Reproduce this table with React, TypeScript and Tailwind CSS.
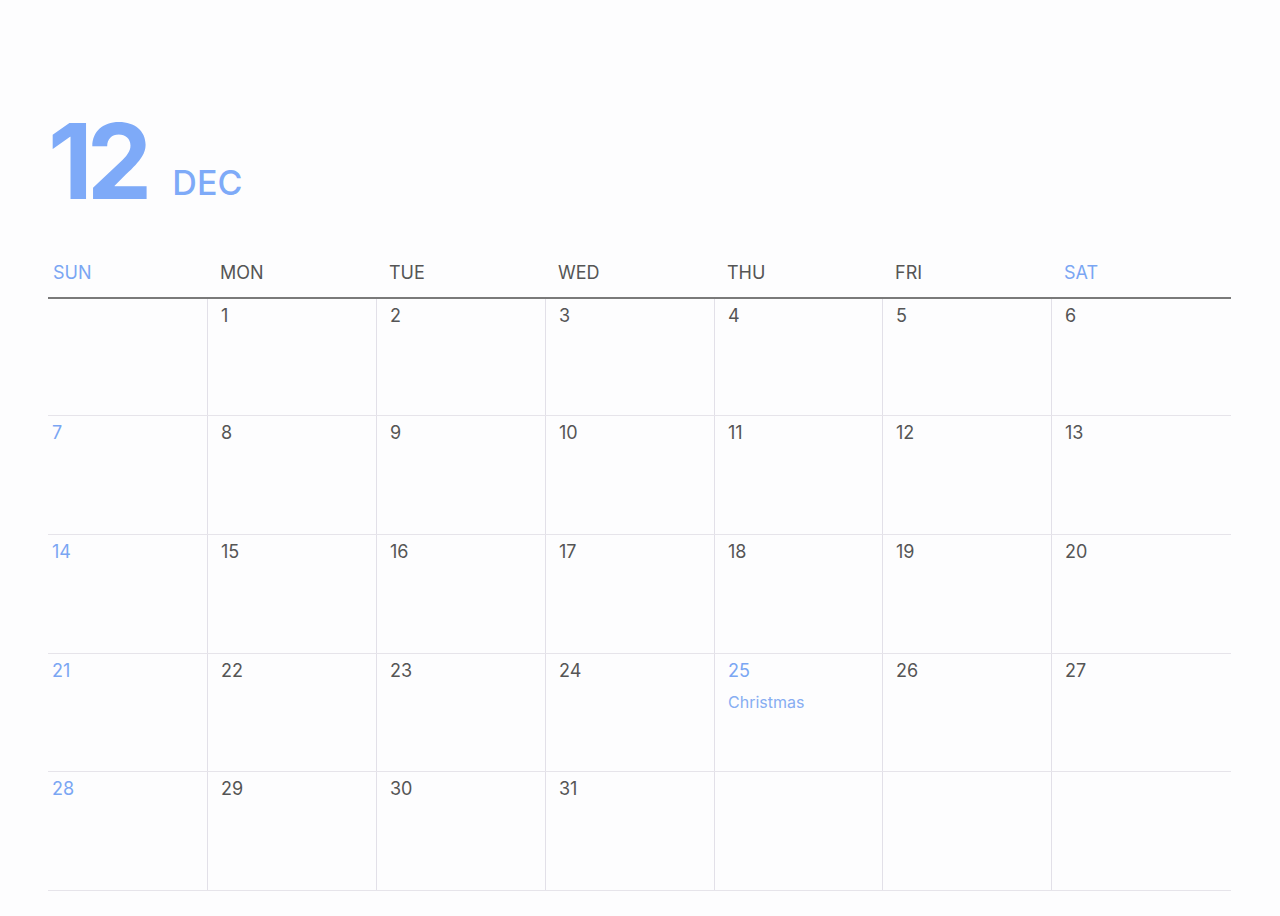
const days = ["SUN", "MON", "TUE", "WED", "THU", "FRI", "SAT"];

type Cell = { n?: number; note?: string };

const weeks: Cell[][] = [
  [{}, { n: 1 }, { n: 2 }, { n: 3 }, { n: 4 }, { n: 5 }, { n: 6 }],
  [{ n: 7 }, { n: 8 }, { n: 9 }, { n: 10 }, { n: 11 }, { n: 12 }, { n: 13 }],
  [{ n: 14 }, { n: 15 }, { n: 16 }, { n: 17 }, { n: 18 }, { n: 19 }, { n: 20 }],
  [{ n: 21 }, { n: 22 }, { n: 23 }, { n: 24 }, { n: 25, note: "Christmas" }, { n: 26 }, { n: 27 }],
  [{ n: 28 }, { n: 29 }, { n: 30 }, { n: 31 }, {}, {}, {}],
];

const rowH = ["h-[117px]", "h-[119px]", "h-[119px]", "h-[118px]", "h-[119px]"];

const cols = "grid grid-cols-[159px_169px_169px_169px_168px_169px_180px]";

export default function App() {
  return (
    <div className="min-h-[916px] w-[1280px] bg-[#fdfdfe] px-12 pt-[120px] font-['Inter',sans-serif]">
      {/* Month heading */}
      <div className="flex items-end gap-[26px]">
        <span className="text-[104px] font-bold leading-[0.8] tracking-[-6px] text-[#7eaaf8]">12</span>
        <span className="pb-[3px] text-[34px] font-medium leading-none text-[#7eaaf8]">DEC</span>
      </div>

      {/* Weekday header */}
      <div className={`${cols} mt-[58px] w-[1183px] border-b-2 border-[#7a7a7a]`}>
        {days.map((d, i) => (
          <div
            key={d}
            className={`pb-[12px] text-[18px] leading-6 ${i === 0 ? "pl-[5px]" : "pl-[13px]"} ${
              i === 0 || i === 6 ? "text-[#7aa6f3]" : "text-[#555]"
            }`}
          >
            {d}
          </div>
        ))}
      </div>

      {/* Weeks */}
      <div className="w-[1183px]">
        {weeks.map((w, r) => (
          <div key={r} className={`${cols} ${rowH[r]} border-b border-[#e6e4ea]`}>
            {w.map((c, i) => (
              <div
                key={i}
                className={`pt-[5px] ${i === 0 ? "pl-[4px]" : "border-l border-[#e2e0e8] pl-[13px]"}`}
              >
                {c.n && (
                  <div className={`text-[18px] leading-6 ${i === 0 || c.note ? "text-[#7aa6f3]" : "text-[#555]"}`}>
                    {c.n}
                  </div>
                )}
                {c.note && <div className="mt-[9px] text-[16px] leading-5 text-[#87adf2]">{c.note}</div>}
              </div>
            ))}
          </div>
        ))}
      </div>
    </div>
  );
}
